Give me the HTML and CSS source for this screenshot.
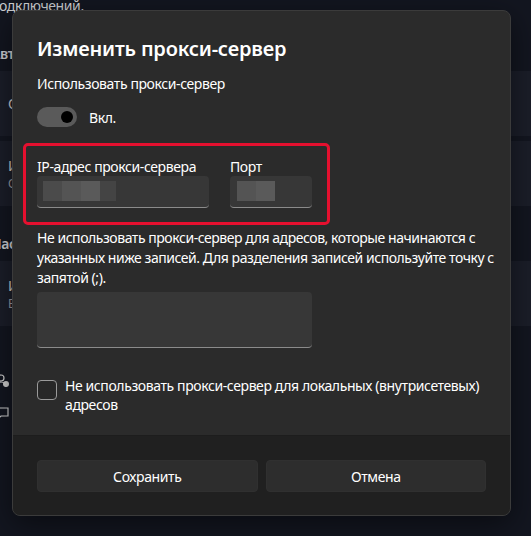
FILE: index.html
```html
<!DOCTYPE html>
<html lang="ru">
<head>
    <meta charset="UTF-8">
    <meta name="viewport" content="width=device-width, initial-scale=1.0">
    <title>Изменить прокси-сервер</title>
    <link rel="stylesheet" href="styles.css">
</head>
<body>

<div class="page">
    <p class="page-note">подключений.</p>

    <h2 class="section-title">Автоматическая настройка прокси</h2>
    <div class="card">
        <div class="card-title">Определять параметры автоматически</div>
    </div>
    <div class="card">
        <div class="card-title">Использовать сценарий настройки</div>
        <div class="card-sub">Откл.</div>
    </div>

    <h2 class="section-title">Настройка прокси вручную</h2>
    <div class="card">
        <div class="card-title">Использовать прокси-сервер</div>
        <div class="card-sub">Вкл.</div>
    </div>

    <ul class="links">
        <li>
            <svg viewBox="0 0 16 16" width="16" height="16">
                <circle cx="7" cy="5" r="3" fill="none" stroke="#cfcfcf" stroke-width="1.2"/>
                <path d="M2 14c0-3 2.2-5 5-5s5 2 5 5" fill="none" stroke="#cfcfcf" stroke-width="1.2"/>
                <circle cx="12" cy="11" r="3" fill="#cfcfcf"/>
            </svg>
            Получить помощь
        </li>
        <li>
            <svg viewBox="0 0 16 16" width="16" height="16">
                <path d="M2 3h12v8H7l-3 3v-3H2z" fill="none" stroke="#cfcfcf" stroke-width="1.2"/>
            </svg>
            Отправить отзыв
        </li>
    </ul>
</div>

<div class="dialog">
    <div class="dialog-body">
        <h1 class="dialog-title">Изменить прокси-сервер</h1>
        <p class="label">Использовать прокси-сервер</p>
        <div class="toggle-row">
            <span class="toggle"><span class="knob"></span></span>
            <span>Вкл.</span>
        </div>

        <div class="fields">
            <div class="field">
                <span class="field-label">IP-адрес прокси-сервера</span>
                <div class="input ip">
                    <span class="px p1"></span><span class="px p2"></span><span class="px p3"></span><span class="px p4"></span>
                </div>
            </div>
            <div class="field">
                <span class="field-label">Порт</span>
                <div class="input port">
                    <span class="px p2"></span><span class="px p3"></span>
                </div>
            </div>
            <div class="mark"></div>
        </div>

        <p class="hint">Не использовать прокси-сервер для адресов, которые начинаются с указанных ниже записей. Для разделения записей используйте точку с запятой (;).</p>
        <div class="textarea"></div>

        <label class="check-row">
            <span class="checkbox"></span>
            <span>Не использовать прокси-сервер для локальных (внутрисетевых) адресов</span>
        </label>
    </div>

    <div class="dialog-footer">
        <button type="button" class="btn">Сохранить</button>
        <button type="button" class="btn">Отмена</button>
    </div>
</div>

</body>
</html>
```

FILE: styles.css
```css
/* Page behind the dialog */
body {
    font-family: "Noto Sans", "Open Sans", sans-serif;
    font-size: 14px;
    letter-spacing: -0.4px;
    margin: 0;
    padding: 0;
    width: 531px;
    height: 536px;
    overflow: hidden;
    background-color: #131620;
    color: #ffffff;
}

.page {
    margin: -4px 0 0 -9px;
    color: #cfd0d4;
}

.page-note {
    margin: 0;
    line-height: 20px;
}

.section-title {
    margin: 28px 0 7px;
    font-size: 14px;
    font-weight: 600;
    line-height: 20px;
}

.section-title + .card {
    margin-top: 0;
}

.card {
    height: 65px;
    margin-top: 5px;
    padding-left: 17px;
    background-color: #1b1e29;
    display: flex;
    flex-direction: column;
    justify-content: center;
}

.card-sub {
    font-size: 12px;
    color: #9a9ca3;
}

.links {
    list-style: none;
    margin: 39px 0 0;
    padding: 0 0 0 3px;
}

.links li {
    display: flex;
    align-items: center;
    gap: 10px;
    height: 32px;
}

/* Dialog */
.dialog {
    position: absolute;
    left: 12px;
    top: 10px;
    width: 497px;
    height: 504px;
    border: 1px solid #3b3b3b;
    border-radius: 8px;
    background-color: #2b2b2b;
    overflow: hidden;
    display: flex;
    flex-direction: column;
    box-shadow: 0 8px 30px rgba(0, 0, 0, 0.5);
}

.dialog-body {
    flex: 1;
    padding: 24px 24px 0;
}

.dialog-title {
    margin: 0;
    font-size: 20px;
    font-weight: 600;
    line-height: 28px;
    letter-spacing: -0.2px;
}

.label {
    margin: 11px 0 0;
    line-height: 20px;
}

.toggle-row {
    display: flex;
    align-items: center;
    gap: 12px;
    margin-top: 13px;
    height: 20px;
}

.toggle {
    width: 40px;
    height: 20px;
    border-radius: 10px;
    background-color: #5a5a5a;
    display: flex;
    align-items: center;
    justify-content: flex-end;
    padding-right: 4px;
    box-sizing: border-box;
}

.knob {
    width: 12px;
    height: 12px;
    border-radius: 50%;
    background-color: #000000;
}

/* IP and port */
.fields {
    position: relative;
    display: flex;
    gap: 21px;
    margin-top: 30px;
    width: 275px;
}

.field {
    display: flex;
    flex-direction: column;
}

.field-label {
    line-height: 19px;
}

.input {
    height: 32px;
    box-sizing: border-box;
    border-radius: 4px;
    background-color: #373737;
    border-bottom: 1px solid #8b8b8b;
    display: flex;
    align-items: center;
    padding: 0 0 1px 6px;
}

.input.ip {
    width: 172px;
}

.input.port {
    width: 82px;
    padding-left: 7px;
}

.px {
    width: 19px;
    height: 20px;
}

.p1 { background-color: #4b4b4b; }
.p2 { background-color: #545454; }
.p3 { background-color: #5a5a5a; }
.p4 { background-color: #444444; width: 16px; }

.mark {
    position: absolute;
    left: -14px;
    top: -14px;
    right: -18px;
    bottom: -17px;
    border: 3px solid #e5102f;
    border-radius: 5px;
}

.hint {
    margin: 20px -10px 0 0;
    line-height: 20px;
    letter-spacing: -0.45px;
}

.textarea {
    width: 275px;
    height: 56px;
    margin-top: 4px;
    box-sizing: border-box;
    border-radius: 4px;
    background-color: #373737;
    border-bottom: 1px solid #8b8b8b;
}

.check-row {
    display: flex;
    gap: 8px;
    margin-top: 28px;
    line-height: 19px;
}

.checkbox {
    flex: none;
    width: 20px;
    height: 20px;
    margin-top: 4px;
    box-sizing: border-box;
    border: 1px solid #9a9a9a;
    border-radius: 4px;
    background-color: #272727;
}

/* Footer buttons */
.dialog-footer {
    height: 80px;
    box-sizing: border-box;
    padding: 24px;
    border-top: 1px solid #1d1d1d;
    background-color: #202020;
    display: flex;
    gap: 8px;
}

.btn {
    flex: 1;
    height: 32px;
    border: 1px solid #303030;
    border-radius: 4px;
    background-color: #2d2d2d;
    color: #ffffff;
    font-family: inherit;
    font-size: 14px;
    letter-spacing: inherit;
}
```
